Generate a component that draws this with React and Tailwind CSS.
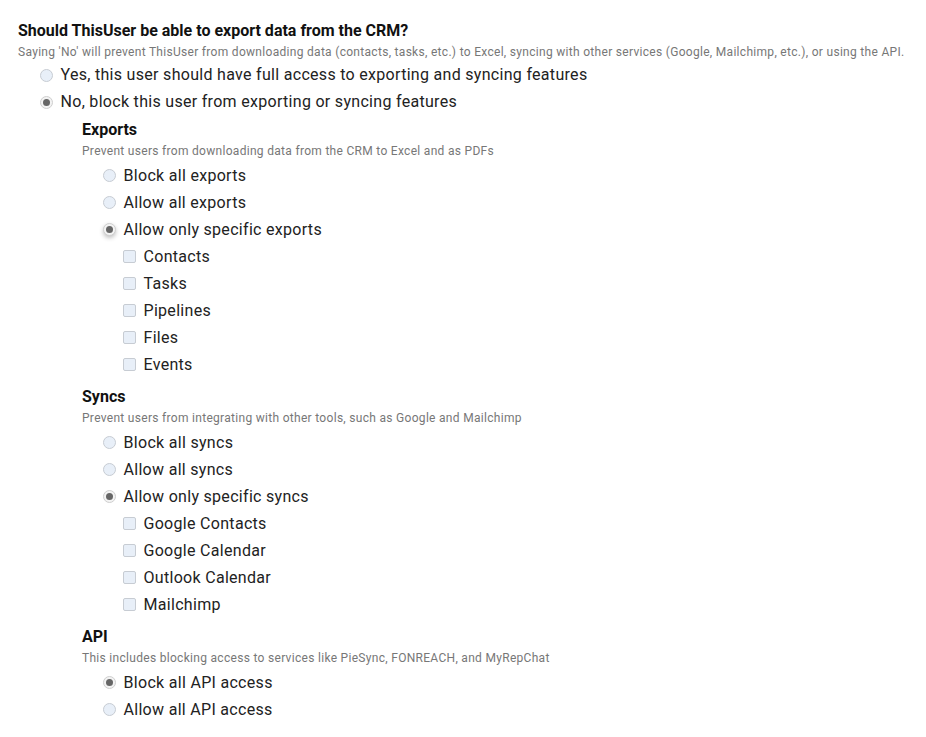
import React from "react";

const Radio = ({ checked, label, focused }) => (
  <div className="flex items-center h-[27px]">
    <span
      className={
        "w-[13px] h-[13px] rounded-full border flex items-center justify-center shrink-0 " +
        (checked
          ? "bg-[#f3f3f3] border-[#cfcfcf]"
          : "bg-[#e8eff8] border-[#c7ccd3]") +
        (focused ? " shadow-[0_2px_4px_rgba(0,0,0,0.25)]" : "")
      }
    >
      {checked && <span className="w-[7px] h-[7px] rounded-full bg-[#666]" />}
    </span>
    <span className="ml-[8px] text-[16px] leading-[20px] tracking-[0.3px] text-[#222]">{label}</span>
  </div>
);

const Checkbox = ({ label }) => (
  <div className="flex items-center h-[27px]">
    <span className="w-[13px] h-[13px] rounded-[2px] border border-[#c7ccd3] bg-[#e8eff8] shrink-0" />
    <span className="ml-[8px] text-[16px] leading-[20px] tracking-[0.3px] text-[#222]">{label}</span>
  </div>
);

const Section = ({ title, desc, children, first }) => (
  <div className={first ? "mt-[4px]" : "mt-[8.5px]"}>
    <h3 className="text-[16px] leading-[20px] font-bold text-[#111]">{title}</h3>
    <p className="mt-[3px] text-[12px] leading-[16px] tracking-[0.3px] text-[#777]">{desc}</p>
    <div className="mt-[3.5px] pl-[20.5px]">{children}</div>
  </div>
);

export default function App() {
  const exportsList = ["Contacts", "Tasks", "Pipelines", "Files", "Events"];
  const syncsList = ["Google Contacts", "Google Calendar", "Outlook Calendar", "Mailchimp"];

  return (
    <div className="min-h-[737px] bg-white pl-[18px] pt-[21px] font-['Roboto',_'Liberation_Sans',_sans-serif]">
      <h2 className="text-[16px] leading-[20px] font-bold text-[#111]">
        Should ThisUser be able to export data from the CRM?
      </h2>
      <p className="mt-[3px] text-[12px] leading-[16px] tracking-[0.3px] text-[#777]">
        Saying 'No' will prevent ThisUser from downloading data (contacts, tasks, etc.) to Excel, syncing with other services (Google, Mailchimp, etc.), or using the API.
      </p>
      <div className="mt-[1.5px] pl-[21.5px]">
        <Radio label="Yes, this user should have full access to exporting and syncing features" />
        <Radio checked label="No, block this user from exporting or syncing features" />

        <div className="pl-[42.5px]">
          <Section first title="Exports" desc="Prevent users from downloading data from the CRM to Excel and as PDFs">
            <Radio label="Block all exports" />
            <Radio label="Allow all exports" />
            <Radio checked focused label="Allow only specific exports" />
            <div className="pl-[20px]">
              {exportsList.map((e) => (
                <Checkbox key={e} label={e} />
              ))}
            </div>
          </Section>

          <Section title="Syncs" desc="Prevent users from integrating with other tools, such as Google and Mailchimp">
            <Radio label="Block all syncs" />
            <Radio label="Allow all syncs" />
            <Radio checked label="Allow only specific syncs" />
            <div className="pl-[20px]">
              {syncsList.map((s) => (
                <Checkbox key={s} label={s} />
              ))}
            </div>
          </Section>

          <Section title="API" desc="This includes blocking access to services like PieSync, FONREACH, and MyRepChat">
            <Radio checked label="Block all API access" />
            <Radio label="Allow all API access" />
          </Section>
        </div>
      </div>
    </div>
  );
}
